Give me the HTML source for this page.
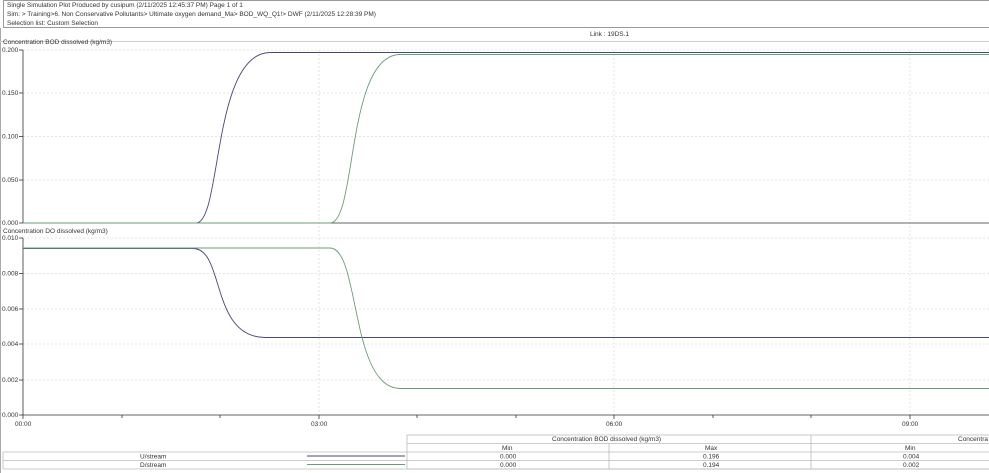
<!DOCTYPE html>
<html><head><meta charset="utf-8"><style>
body{margin:0;width:989px;height:473px;background:#fff;overflow:hidden;font-family:"Liberation Sans",sans-serif;}
svg{display:block}
text{font-family:"Liberation Sans",sans-serif;font-size:6.5px;fill:#333}
</style></head><body>
<svg width="989" height="473" viewBox="0 0 989 473">
<rect x="0" y="0" width="989" height="473" fill="#fff"/>
<rect x="3.5" y="0.5" width="990" height="27" fill="#fff" stroke="#999"/>
<text x="7" y="7">Single Simulation Plot Produced by cusipum (2/11/2025 12:45:37 PM) Page 1 of 1</text>
<text x="7" y="16">Sim: &gt; Training&gt;6. Non Conservative Pollutants&gt; Ultimate oxygen demand_Ma&gt; BOD_WQ_Q1!&gt; DWF (2/11/2025 12:28:39 PM)</text>
<text x="7" y="25">Selection list: Custom Selection</text>
<line x1="0.5" y1="28" x2="0.5" y2="473" stroke="#aaa"/>
<text x="590" y="36">Link :  19DS.1</text>
<line x1="0" y1="41.5" x2="989" y2="41.5" stroke="#ccc"/>
<text x="3" y="44">Concentration BOD dissolved (kg/m3)</text>
<g stroke="#ddd" stroke-dasharray="2,2" stroke-width="0.8">
<line x1="23" y1="50" x2="989" y2="50"/><line x1="23" y1="93" x2="989" y2="93"/><line x1="23" y1="136.5" x2="989" y2="136.5"/><line x1="23" y1="180" x2="989" y2="180"/>
<line x1="319" y1="50" x2="319" y2="415"/><line x1="614" y1="50" x2="614" y2="415"/><line x1="910" y1="50" x2="910" y2="415"/>
<line x1="23" y1="238" x2="989" y2="238"/><line x1="23" y1="273.5" x2="989" y2="273.5"/><line x1="23" y1="309" x2="989" y2="309"/><line x1="23" y1="344" x2="989" y2="344"/><line x1="23" y1="380" x2="989" y2="380"/>
</g>
<g fill="none" stroke="#333" stroke-width="0.8">
<line x1="23" y1="50" x2="23" y2="223"/><line x1="23" y1="223" x2="989" y2="223"/>
<line x1="23" y1="238" x2="23" y2="415"/><line x1="23" y1="415" x2="989" y2="415"/>
</g>
<g stroke="#333" stroke-width="0.8">
<line x1="19" y1="50" x2="23" y2="50"/><line x1="19" y1="93" x2="23" y2="93"/><line x1="19" y1="136.5" x2="23" y2="136.5"/><line x1="19" y1="180" x2="23" y2="180"/><line x1="19" y1="223" x2="23" y2="223"/>
<line x1="19" y1="238" x2="23" y2="238"/><line x1="19" y1="273.5" x2="23" y2="273.5"/><line x1="19" y1="309" x2="23" y2="309"/><line x1="19" y1="344" x2="23" y2="344"/><line x1="19" y1="380" x2="23" y2="380"/><line x1="19" y1="415" x2="23" y2="415"/>
<line x1="23" y1="415" x2="23" y2="419"/><line x1="122" y1="415" x2="122" y2="418"/><line x1="220" y1="415" x2="220" y2="418"/><line x1="319" y1="415" x2="319" y2="419"/><line x1="417" y1="415" x2="417" y2="418"/><line x1="516" y1="415" x2="516" y2="418"/><line x1="614" y1="415" x2="614" y2="419"/><line x1="713" y1="415" x2="713" y2="418"/><line x1="811" y1="415" x2="811" y2="418"/><line x1="910" y1="415" x2="910" y2="419"/>
</g>
<text x="2" y="52">0.200</text><text x="2" y="95">0.150</text><text x="2" y="138.5">0.100</text><text x="2" y="182">0.050</text><text x="2" y="225">0.000</text>
<text x="3" y="233">Concentration DO dissolved (kg/m3)</text>
<text x="2" y="240">0.010</text><text x="2" y="275.5">0.008</text><text x="2" y="311">0.006</text><text x="2" y="346">0.004</text><text x="2" y="382">0.002</text><text x="2" y="417">0.000</text>
<text x="15" y="426">00:00</text><text x="311" y="426">03:00</text><text x="606" y="426">06:00</text><text x="902" y="426">09:00</text>
<g fill="none" stroke-width="0.9">
<path d="M23,223 H196 C222,223 212,53 270,52.5 H989" stroke="#454a72"/>
<path d="M23,223 H330 C357,223 346,55 400,54.5 H989" stroke="#6a9e78"/>
<path d="M23,248.5 H193 C225,248.5 210,337 265,337.5 H989" stroke="#454a72"/>
<path d="M23,248 H330 C360,248 350,388 400,388.5 H989" stroke="#6a9e78"/>
</g>
<g stroke="#bbb" stroke-width="0.8" fill="none">
<rect x="407" y="435" width="590" height="34"/>
<line x1="407" y1="443.5" x2="989" y2="443.5"/>
<line x1="3" y1="452" x2="989" y2="452"/>
<line x1="3" y1="460.5" x2="989" y2="460.5"/>
<line x1="3" y1="469" x2="989" y2="469"/>
<line x1="3" y1="452" x2="3" y2="469"/>
<line x1="609" y1="443.5" x2="609" y2="469"/>
<line x1="811" y1="435" x2="811" y2="469"/>
</g>
<line x1="307" y1="456" x2="405" y2="456" stroke="#454a72"/>
<line x1="307" y1="464.5" x2="405" y2="464.5" stroke="#6a9e78"/>
<text x="140" y="458.5">U/stream</text><text x="140" y="467">D/stream</text>
<text x="552" y="441">Concentration BOD dissolved (kg/m3)</text>
<text x="958" y="441">Concentra</text>
<text x="502" y="450">Min</text><text x="705" y="450">Max</text><text x="905" y="450">Min</text>
<text x="500" y="458.5">0.000</text><text x="703" y="458.5">0.196</text><text x="903" y="458.5">0.004</text>
<text x="500" y="467">0.000</text><text x="703" y="467">0.194</text><text x="903" y="467">0.002</text>
</svg>
</body></html>
